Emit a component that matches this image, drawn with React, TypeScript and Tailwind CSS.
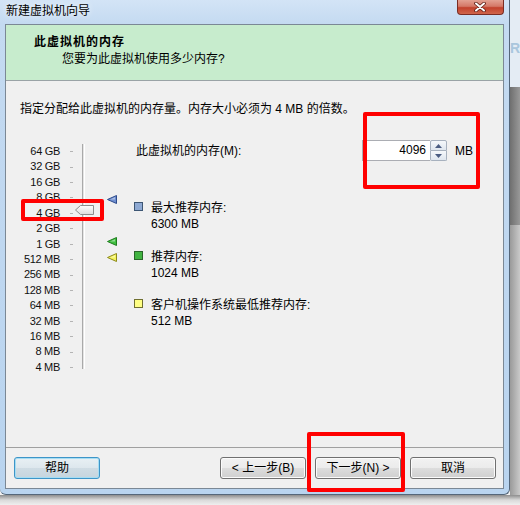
import React from 'react';

const scale = ['64 GB', '32 GB', '16 GB', '8 GB', '4 GB', '2 GB', '1 GB', '512 MB', '256 MB', '128 MB', '64 MB', '32 MB', '16 MB', '8 MB', '4 MB'];

const ui = "font-['Liberation_Sans','Noto_Sans_CJK_SC',sans-serif]";

function Marker({ fill, stroke, top }: { fill: string; stroke: string; top: number }) {
  return (
    <svg className="absolute left-[34px]" style={{ top }} width="10" height="10" viewBox="0 0 10 10">
      <polygon points="0.5,4.5 9.5,0.5 9.5,8.5" fill={fill} stroke={stroke} strokeWidth="1" />
      <polygon points="3,4.5 8,2.2 8,4.5" fill="#ffffff" opacity="0.45" />
    </svg>
  );
}

function Legend({ fill, border, title, value, className = '' }: { fill: string; border: string; title: string; value: string; className?: string }) {
  return (
    <div className={`flex leading-[15.5px] ${className}`}>
      <span className={`w-[9px] h-[9px] mt-[1px] border ${fill} ${border}`} />
      <div className="ml-[8px]">
        <div>{title}</div>
        <div>{value}</div>
      </div>
    </div>
  );
}

function WizButton({ label, primary }: { label: string; primary?: boolean }) {
  const look = primary
    ? 'border-[#3d95c8] bg-[linear-gradient(to_bottom,#e8f0f4_0%,#dde7ed_50%,#cfdce4_51%,#c6d5de_100%)] shadow-[inset_0_0_0_1px_#a6ddf3]'
    : 'border-[#707070] bg-[linear-gradient(to_bottom,#f2f2f2_0%,#ebebeb_50%,#dddddd_51%,#cfcfcf_100%)] shadow-[inset_0_0_0_1px_#fbfbfb]';
  return (
    <button className={`h-[22px] w-[86px] rounded-[3px] border text-[12px] text-black flex items-center justify-center ${look}`}>
      {label}
    </button>
  );
}

export default function App() {
  return (
    <div className={`relative w-[520px] h-[505px] overflow-hidden bg-[#f2f2f2] ${ui} text-[12px] text-black`}>
      <div className="flex">
        {/* window */}
        <div className="w-[510px] h-[495px] flex flex-col bg-[linear-gradient(to_bottom,#d3e4f6_0px,#c4daf1_24px,#b9d4ef_100%)] border-r border-b border-[#55677a] rounded-b-[6px]">
          <div className="h-[24px] flex items-start">
            <span className="pl-[6px] pt-[3px] leading-[16px] [text-shadow:0_0_6px_#ffffff]">新建虚拟机向导</span>
            <div className="ml-auto mr-[5px] w-[47px] h-[15px] rounded-b-[4px] border border-t-0 border-[#7a2d24] bg-[linear-gradient(to_bottom,#e3a192_0%,#d47867_45%,#c2412c_55%,#d0664c_100%)] flex items-center justify-center">
              <svg width="12" height="10" viewBox="0 0 12 10">
                <path d="M2 1.5 L10 8.5 M10 1.5 L2 8.5" stroke="#5a1d15" strokeWidth="3.6" strokeLinecap="round" />
                <path d="M2 1.5 L10 8.5 M10 1.5 L2 8.5" stroke="#ffffff" strokeWidth="2" strokeLinecap="round" />
              </svg>
            </div>
          </div>

          {/* client area */}
          <div className="ml-[5px] w-[499px] h-[465px] border border-[#7b8895] bg-[#f0f0f0] flex flex-col">
            <div className="h-[56px] bg-[#c7eccd] border-b border-[#9aa3a6] pl-[28px] pt-[9px]">
              <div className="font-bold leading-[16px] tracking-[1px]">此虚拟机的内存</div>
              <div className="mt-[1px] ml-[28px] leading-[16px]">您要为此虚拟机使用多少内存?</div>
            </div>

            <div className="flex-1 pt-[20px]">
              <div className="pl-[14px] leading-[16px]">指定分配给此虚拟机的内存量。内存大小必须为 4 MB 的倍数。</div>

              <div className="flex mt-[26px]">
                <div className="w-[54px] pt-[1px] text-right text-[11px] tracking-[-0.3px] text-[#111]">
                  {scale.map((s) => (
                    <div key={s} className="h-[15.43px] leading-[15.43px]">{s}</div>
                  ))}
                </div>
                <div className="w-[13px] pt-[1px]">
                  {scale.map((s) => (
                    <div key={s} className="h-[15.43px] flex items-center pl-[10px]">
                      <span className="w-[3px] h-px bg-[#b4b4b4]" />
                    </div>
                  ))}
                </div>
                <div className="relative w-[61px] pl-[9px] pt-[1px]">
                  <div className="w-[3px] h-[225px] border-l border-[#a9a9a9] border-r border-r-white bg-[#e4e4e4]" />
                  <svg className="absolute left-[2px] top-[62px]" width="19" height="11" viewBox="0 0 19 11">
                    <defs>
                      <linearGradient id="th" x1="0" y1="0" x2="0" y2="1">
                        <stop offset="0" stopColor="#ffffff" />
                        <stop offset="1" stopColor="#dcdcdc" />
                      </linearGradient>
                    </defs>
                    <polygon points="0.5,5 5.5,0.5 18.5,0.5 18.5,9.5 5.5,9.5" fill="url(#th)" stroke="#8c8c8c" strokeWidth="1" />
                  </svg>
                  <Marker fill="#6f8fd0" stroke="#2e4b8c" top={52} />
                  <Marker fill="#3fbf3f" stroke="#1f7d1f" top={94} />
                  <Marker fill="#f4f25a" stroke="#8c8a1c" top={110} />
                </div>

                <div className="flex-1">
                  <div className="flex items-start h-[21px] -mt-[3px]">
                    <span className="ml-[2px] w-[226px] pt-[3px] leading-[16px]">此虚拟机的内存(M):</span>
                    <div className="flex h-[21px]">
                      <div className="w-[68px] h-[21px] border border-[#abadb3] border-r-0 bg-white text-right pr-[4px] leading-[19px]">4096</div>
                      <div className="w-[17px] h-[21px] flex flex-col">
                        <div className="h-[11px] border border-[#a7b1be] rounded-t-[2px] bg-[linear-gradient(to_bottom,#f5f8fb,#dfe6ee)] flex items-center justify-center">
                          <svg width="7" height="4" viewBox="0 0 7 4"><polygon points="0,4 3.5,0 7,4" fill="#4b5d82" /></svg>
                        </div>
                        <div className="h-[10px] border border-t-0 border-[#a7b1be] rounded-b-[2px] bg-[linear-gradient(to_bottom,#f5f8fb,#dfe6ee)] flex items-center justify-center">
                          <svg width="7" height="4" viewBox="0 0 7 4"><polygon points="0,0 7,0 3.5,4" fill="#4b5d82" /></svg>
                        </div>
                      </div>
                    </div>
                    <span className="ml-[8px] pt-[3px] leading-[16px]">MB</span>
                  </div>

                  <Legend className="mt-[40px]" fill="bg-[#8ea9d3]" border="border-[#3d5674]" title="最大推荐内存:" value="6300 MB" />
                  <Legend className="mt-[18px]" fill="bg-[#42b442]" border="border-[#2a662a]" title="推荐内存:" value="1024 MB" />
                  <Legend className="mt-[17px]" fill="bg-[#ffff84]" border="border-[#6f6f30]" title="客户机操作系统最低推荐内存:" value="512 MB" />
                </div>
              </div>
            </div>

            <div className="h-[41px] border-t border-[#a0a0a0] flex items-start pt-[9px] pl-[8px] pr-[7px]">
              <WizButton label="帮助" primary />
              <div className="ml-auto flex gap-[9px]">
                <WizButton label="< 上一步(B)" />
                <WizButton label="下一步(N) >" />
                <WizButton label="取消" />
              </div>
            </div>
          </div>
        </div>

        {/* desktop strip on the right */}
        <div className="flex-1 flex flex-col h-[495px]">
          <div className="h-[87px] bg-[#e4ecf4] pt-[40px]">
            <div className="text-[14px] font-bold leading-[16px] text-[#a9c6dd]">R</div>
          </div>
          <div className="h-[138px] bg-[linear-gradient(to_right,#6f6f6f,#999999)]" />
          <div className="flex-1 bg-[linear-gradient(to_right,#9a9a9a,#c9c9c9)]" />
        </div>
      </div>
      <div className="h-[10px] bg-[linear-gradient(to_bottom,#8d8d8d,#d9d9d9_50%,#efefef)]" />

      {/* red annotation boxes */}
      <div className="absolute left-[363px] top-[112px] w-[117px] h-[77px] border-[4px] border-[#ff0000] rounded-[2px]" />
      <div className="absolute left-[21px] top-[199px] w-[83px] h-[22px] border-[4px] border-[#ff0000] rounded-[2px]" />
      <div className="absolute left-[307px] top-[432px] w-[98px] h-[60px] border-[4px] border-[#ff0000] rounded-[2px]" />
    </div>
  );
}
